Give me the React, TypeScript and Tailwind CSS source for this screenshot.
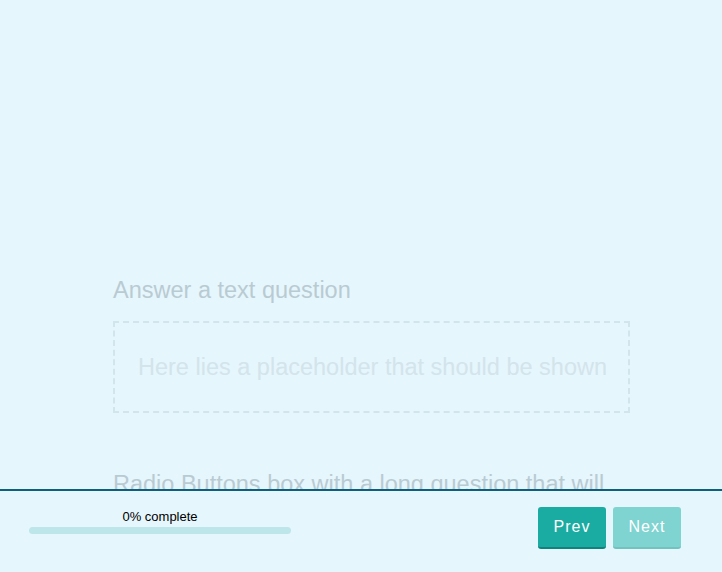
import React from "react";

export default function App() {
  return (
    <div
      className="relative h-[572px] w-full overflow-hidden bg-[#e6f6fd]"
      style={{ fontFamily: '"Liberation Sans", Arial, sans-serif' }}
    >
      <div className="flex flex-col pl-[113px] pr-[92px] pt-[276px]">
        <div className="text-[23.5px] leading-[28px] text-[#b9cbd2]">Answer a text question</div>
        <div className="mt-[17px] flex h-[92px] w-[517px] items-center border-2 border-dashed border-[#d2e5ec] pl-[23px] pr-[22px]">
          <div className="overflow-hidden whitespace-nowrap text-[23.5px] leading-[28px] text-[#d3e4eb]">
            Here lies a placeholder that should be shown
          </div>
        </div>
        <div className="mt-[57px] whitespace-nowrap text-[23.5px] leading-[28px] text-[#b9cbd2]">
          Radio Buttons box with a long question that will
        </div>
      </div>

      <div className="absolute bottom-0 left-0 right-0 flex h-[83px] items-start justify-between border-t-2 border-[#0d5f7c] bg-[#e6f6fd]">
        <div className="ml-[29px] mt-[18px] flex w-[262px] flex-col items-center">
          <div className="text-[13px] leading-[15px] text-black">0% complete</div>
          <div className="mt-[3px] h-[7px] w-full rounded-full bg-[#bde6ea]" />
        </div>
        <div className="mr-[41px] mt-[16px] flex gap-[7px]">
          <button className="h-[42px] w-[68px] rounded-[3px] border-b-2 border-[#12837c] bg-[#1aaca2] text-[16px] tracking-[1px] text-white">
            Prev
          </button>
          <button className="h-[42px] w-[68px] rounded-[3px] border-b-2 border-[#72c2c0] bg-[#7fd3d0] text-[16px] tracking-[1px] text-white">
            Next
          </button>
        </div>
      </div>
    </div>
  );
}
